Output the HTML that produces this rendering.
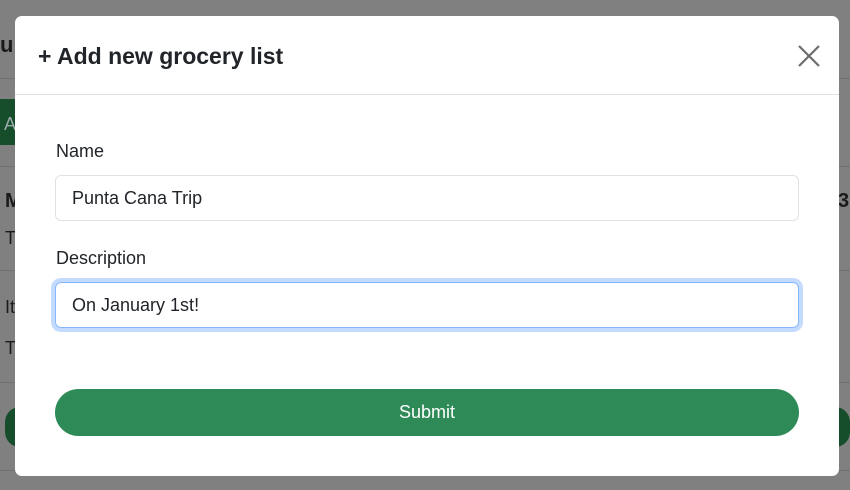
<!DOCTYPE html>
<html><head><style>
*{box-sizing:border-box;margin:0;padding:0}
body{width:850px;height:490px;overflow:hidden;background:#808080;font-family:"Liberation Sans",sans-serif;position:relative;color:#212529}
.bg{position:absolute;color:#1a1a1a;font-size:20px}
.hl{position:absolute;left:0;right:0;height:1px;background:#707070}
.modal{position:absolute;left:15px;top:16px;width:824px;height:460px;background:#fff;border-radius:7px}
.hdr{height:79px;border-bottom:1px solid #dee2e6;position:relative}
.title{position:absolute;left:23px;top:27px;font-size:23px;font-weight:bold}
.close{position:absolute;right:18px;top:28px;width:24px;height:24px}
label{position:absolute;left:41px;font-size:18px}
.inp{position:absolute;left:40px;width:744px;height:46px;border:1px solid #dee2e6;border-radius:6px;font-size:18px;padding:12px 16px}
.focus{border-color:#86b7fe;box-shadow:0 0 0 4px #c2dbfe}
.btn{position:absolute;left:40px;top:373px;width:744px;height:47px;background:#2e8b57;border-radius:24px;color:#fff;font-size:18px;text-align:center;line-height:47px}
</style></head><body>
<div class="hl" style="top:78px"></div>
<div class="hl" style="top:166px"></div>
<div class="hl" style="top:270px"></div>
<div class="hl" style="top:382px"></div>
<div class="hl" style="top:470px"></div>
<div style="position:absolute;left:0;top:99px;width:20px;height:46px;background:#164d2b"></div>
<div class="bg" style="left:4px;top:114px;color:#9aa;font-size:18px">A</div>
<div class="bg" style="left:0;top:32px;font-weight:bold;font-size:22px">ur</div>
<div class="bg" style="left:5px;top:190px;font-weight:bold">M</div>
<div class="bg" style="left:5px;top:228px;font-size:18px">T</div>
<div class="bg" style="left:5px;top:297px;font-size:18px">It</div>
<div class="bg" style="left:5px;top:338px;font-size:18px">T</div>
<div style="position:absolute;left:5px;top:407px;width:30px;height:40px;border-radius:20px;background:#164d2b"></div>
<div style="position:absolute;left:820px;top:407px;width:30px;height:40px;border-radius:20px;background:#164d2b"></div>
<div class="bg" style="left:838px;top:190px;font-weight:bold">3</div>
<div class="modal">
<div class="hdr"><div class="title">+ Add new grocery list</div>
<svg class="close" viewBox="0 0 24 24"><path d="M2 2L22 22M22 2L2 22" stroke="#6c6c6c" stroke-width="2.2"/></svg></div>
<label style="top:125px">Name</label>
<div class="inp" style="top:159px">Punta Cana Trip</div>
<label style="top:232px">Description</label>
<div class="inp focus" style="top:266px">On January 1st!</div>
<div class="btn">Submit</div>
</div>
</body></html>
